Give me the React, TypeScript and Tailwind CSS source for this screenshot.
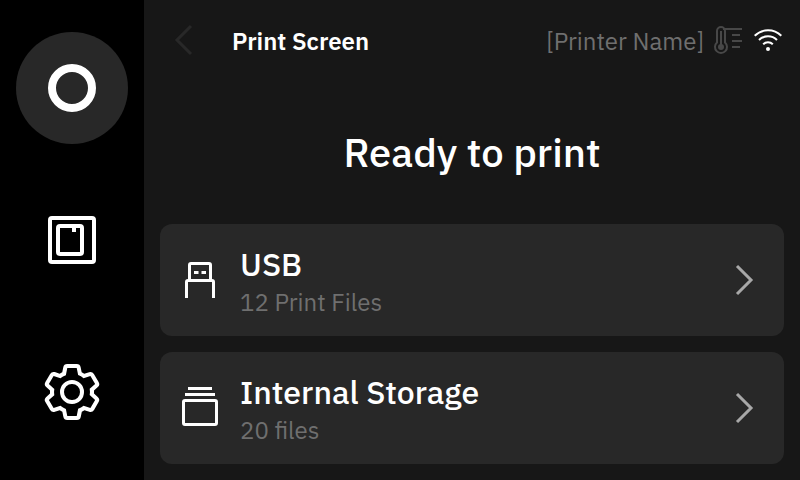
import type { ReactNode } from "react";

type StorageSource = {
  id: string;
  name: string;
  detail: string;
  icon: ReactNode;
};

function SettingsIcon() {
  return (
    <svg viewBox="0 0 32 32" className="size-16" fill="currentColor" aria-hidden="true">
      <path d="M27,16.76c0-.25,0-.5,0-.76s0-.51,0-.77l1.92-1.68A2,2,0,0,0,29.3,11L26.94,7a2,2,0,0,0-1.73-1,2,2,0,0,0-.64.1l-2.43.82a11.35,11.35,0,0,0-1.31-.75l-.51-2.52a2,2,0,0,0-2-1.61H13.64a2,2,0,0,0-2,1.61l-.51,2.52a11.48,11.48,0,0,0-1.32.75L7.43,6.06A2,2,0,0,0,6.79,6,2,2,0,0,0,5.06,7L2.7,11a2,2,0,0,0,.41,2.51L5,15.24c0,.25,0,.5,0,.76s0,.51,0,.77L3.11,18.45A2,2,0,0,0,2.7,21L5.06,25a2,2,0,0,0,1.73,1,2,2,0,0,0,.64-.1l2.43-.82a11.35,11.35,0,0,0,1.31.75l.51,2.52a2,2,0,0,0,2,1.61h4.72a2,2,0,0,0,2-1.61l.51-2.52a11.48,11.48,0,0,0,1.32-.75l2.42.82a2,2,0,0,0,.64.1,2,2,0,0,0,1.73-1L29.3,21a2,2,0,0,0-.41-2.51ZM25.21,24l-3.43-1.16a8.86,8.86,0,0,1-2.71,1.57L18.36,28H13.64l-.71-3.55a9.36,9.36,0,0,1-2.7-1.57L6.79,24,4.43,20l2.72-2.4a8.9,8.9,0,0,1,0-3.13L4.43,12,6.79,8l3.43,1.16a8.86,8.86,0,0,1,2.71-1.57L13.64,4h4.72l.71,3.55a9.36,9.36,0,0,1,2.7,1.57L25.21,8,27.57,12l-2.72,2.4a8.9,8.9,0,0,1,0,3.13L27.57,20Z" />
      <path d="M16,22a6,6,0,1,1,6-6A5.94,5.94,0,0,1,16,22Zm0-10a3.91,3.91,0,0,0-4,4,3.91,3.91,0,0,0,4,4,3.91,3.91,0,0,0,4-4A3.91,3.91,0,0,0,16,12Z" />
    </svg>
  );
}

function PrintIcon() {
  return (
    <svg viewBox="0 0 48 48" className="size-12" fill="none" stroke="currentColor" strokeWidth="8" aria-hidden="true">
      <circle cx="24" cy="24" r="20" />
    </svg>
  );
}

function BuildPlateIcon() {
  return (
    <svg viewBox="0 0 48 48" className="size-12" fill="none" stroke="currentColor" strokeWidth="4" aria-hidden="true">
      <rect x="2" y="2" width="44" height="44" rx="2" />
      <rect x="10" y="10" width="24" height="28" rx="2" />
      <path d="M26 10v6" />
    </svg>
  );
}

function UsbIcon() {
  return (
    <svg viewBox="0 0 48 48" className="size-12 shrink-0" fill="none" stroke="currentColor" strokeWidth="3" aria-hidden="true">
      <path d="M13.5 25V9A1.5 1.5 0 0 1 15 7.5h18A1.5 1.5 0 0 1 34.5 9v16" />
      <path d="M10.5 42V26a1.5 1.5 0 0 1 1.5-1.5h24a1.5 1.5 0 0 1 1.500 1.500v16" />
      <path d="M18 16.500h4.500M25.500 16.500H30" />
    </svg>
  );
}

function StorageIcon() {
  return (
    <svg viewBox="0 0 48 48" className="size-12 shrink-0" fill="none" stroke="currentColor" strokeWidth="3" aria-hidden="true">
      <path d="M12 4.500h24M9 10.500h30" />
      <rect x="7.500" y="16.500" width="33" height="24" rx="1.500" />
    </svg>
  );
}

function ThermometerIcon() {
  return (
    <svg viewBox="0 0 32 32" className="size-8 text-[#484848]" fill="none" stroke="currentColor" strokeWidth="2" aria-hidden="true">
      <path d="M5 18.500V7a4 4 0 0 1 8 0v11.500a6 6 0 1 1-8 0Z" />
      <path d="M9 7v14" />
      <circle cx="9" cy="23" r="3" fill="currentColor" stroke="none" />
      <path d="M11 5h19M20 11h8M20 17h10M20 23h8" />
    </svg>
  );
}

function WifiIcon() {
  return (
    <svg viewBox="0 0 32 32" className="size-8" fill="none" stroke="currentColor" strokeWidth="2" aria-hidden="true">
      <path d="M2.700 11.700a19 19 0 0 1 26.600 0" />
      <path d="M7 16a12.800 12.800 0 0 1 18 0" />
      <path d="M11.200 20.300a6.800 6.800 0 0 1 9.600 0" />
      <circle cx="16" cy="25" r="2" fill="currentColor" stroke="none" />
    </svg>
  );
}

function Chevron({ direction, className }: { direction: "left" | "right"; className: string }) {
  return (
    <svg viewBox="0 0 48 48" className={`size-12 shrink-0 ${className}`} fill="none" stroke="currentColor" strokeWidth="3" aria-hidden="true">
      <path d={direction === "left" ? "M31 10 17 24l14 14" : "M17 10l14 14-14 14"} />
    </svg>
  );
}

const NAV_ITEMS = [
  { id: "print", label: "Print", icon: <PrintIcon />, active: true },
  { id: "plate", label: "Build plate", icon: <BuildPlateIcon />, active: false },
  { id: "settings", label: "Settings", icon: <SettingsIcon />, active: false },
];

const SOURCES: StorageSource[] = [
  { id: "usb", name: "USB", detail: "12 Print Files", icon: <UsbIcon /> },
  { id: "internal", name: "Internal Storage", detail: "20 files", icon: <StorageIcon /> },
];

function Sidebar() {
  return (
    <nav className="flex w-36 shrink-0 flex-col items-center justify-between bg-black py-8">
      {NAV_ITEMS.map((item) => (
        <button
          key={item.id}
          type="button"
          aria-label={item.label}
          className={`flex size-28 items-center justify-center rounded-full ${item.active ? "bg-[#282828]" : ""}`}
        >
          {item.icon}
        </button>
      ))}
    </nav>
  );
}

function SourceCard({ source }: { source: StorageSource }) {
  return (
    <button type="button" className="flex h-28 w-full items-center gap-4 rounded-xl bg-[#282828] px-4 text-left">
      {source.icon}
      <span className="flex min-w-0 flex-1 flex-col gap-0.5 pt-0.5">
        <span className="text-[32px] leading-10 font-medium">{source.name}</span>
        <span className="text-2xl text-[#6f6f6f]">{source.detail}</span>
      </span>
      <Chevron direction="right" className="text-[#a8a8a8]" />
    </button>
  );
}

export default function App() {
  return (
    <div className="flex min-h-screen bg-[#171717] font-['IBM_Plex_Sans',Roboto,sans-serif] text-white">
      <Sidebar />

      <main className="flex min-w-0 flex-1 flex-col px-4 pb-4">
        <header className="flex h-20 items-center gap-6">
          <button type="button" aria-label="Back" disabled>
            <Chevron direction="left" className="text-[#282828]" />
          </button>
          <p className="flex-1 pt-0.5 text-2xl font-semibold">Print Screen</p>
          <div className="flex items-center gap-2">
            <span className="pt-0.5 text-2xl text-[#6f6f6f]">[Printer Name]</span>
            <ThermometerIcon />
            <WifiIcon />
          </div>
        </header>

        <h1 className="flex flex-1 items-center justify-center text-[40px] font-medium">Ready to print</h1>

        <div className="flex flex-col gap-4">
          {SOURCES.map((source) => (
            <SourceCard key={source.id} source={source} />
          ))}
        </div>
      </main>
    </div>
  );
}
